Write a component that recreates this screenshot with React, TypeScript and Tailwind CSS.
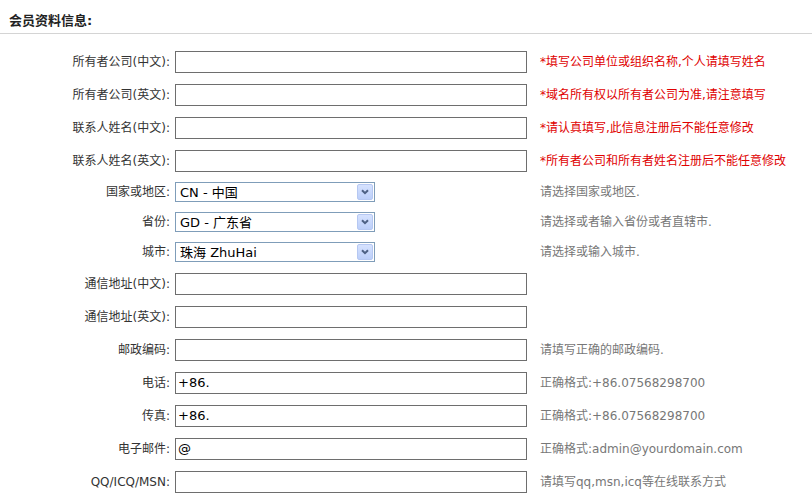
type Row = {
  label: string;
  kind: "input" | "select";
  value?: string;
  note?: string;
  red?: boolean;
};

const rows: Row[] = [
  { label: "所有者公司(中文):", kind: "input", note: "*填写公司单位或组织名称,个人请填写姓名", red: true },
  { label: "所有者公司(英文):", kind: "input", note: "*域名所有权以所有者公司为准,请注意填写", red: true },
  { label: "联系人姓名(中文):", kind: "input", note: "*请认真填写,此信息注册后不能任意修改", red: true },
  { label: "联系人姓名(英文):", kind: "input", note: "*所有者公司和所有者姓名注册后不能任意修改", red: true },
  { label: "国家或地区:", kind: "select", value: "CN - 中国", note: "请选择国家或地区." },
  { label: "省份:", kind: "select", value: "GD - 广东省", note: "请选择或者输入省份或者直辖市." },
  { label: "城市:", kind: "select", value: "珠海 ZhuHai", note: "请选择或输入城市." },
  { label: "通信地址(中文):", kind: "input" },
  { label: "通信地址(英文):", kind: "input" },
  { label: "邮政编码:", kind: "input", note: "请填写正确的邮政编码." },
  { label: "电话:", kind: "input", value: "+86.", note: "正确格式:+86.07568298700" },
  { label: "传真:", kind: "input", value: "+86.", note: "正确格式:+86.07568298700" },
  { label: "电子邮件:", kind: "input", value: "@", note: "正确格式:admin@yourdomain.com" },
  { label: "QQ/ICQ/MSN:", kind: "input", note: "请填写qq,msn,icq等在线联系方式" },
];

function FakeSelect({ value }: { value?: string }) {
  return (
    <div className="flex h-[20px] w-[200px] items-center border border-[#7f9db9] bg-white pl-[4px] pr-[1px]">
      <span className="flex-1 text-[13px] leading-none text-black">{value}</span>
      <span className="flex h-[16px] w-[16px] items-center justify-center rounded-[2px] border border-[#b6c8f2] bg-gradient-to-b from-[#d6e2fe] to-[#bccffa]">
        <svg width="8" height="6" viewBox="0 0 8 6">
          <path d="M1 1.2 L4 4.2 L7 1.2" stroke="#4d6185" strokeWidth="2" fill="none" />
        </svg>
      </span>
    </div>
  );
}

export default function App() {
  return (
    <div className="h-[504px] w-[812px] overflow-hidden bg-white font-['DejaVu_Sans','Noto_Sans_CJK_SC',sans-serif] text-[12px] text-[#333]">
      {/* section title */}
      <div className="h-[34px] border-b border-[#d4d4d4] pl-[9px] pt-[12px]">
        <span className="text-[13px] font-bold leading-[18px] text-[#222]">会员资料信息:</span>
      </div>

      <div className="pt-[11px]">
        {rows.map((r) => (
          <div
            key={r.label}
            className={r.kind === "select" ? "flex h-[30px] items-center" : "flex h-[33px] items-center"}
          >
            <div className="w-[171px] pr-[1px] text-right leading-none">{r.label}</div>
            <div className="ml-[4px]">
              {r.kind === "select" ? (
                <FakeSelect value={r.value} />
              ) : (
                <div className="flex h-[22px] w-[352px] items-center border border-[#6e6e6e] bg-white pl-[2px] text-[13px] leading-none text-black">
                  {r.value}
                </div>
              )}
            </div>
            {r.note && (
              <div
                className={
                  r.kind === "select"
                    ? "ml-[165px] leading-none text-[#777]"
                    : r.red
                      ? "ml-[13px] leading-none text-[#e00000]"
                      : "ml-[13px] leading-none text-[#777]"
                }
              >
                {r.note}
              </div>
            )}
          </div>
        ))}
      </div>
    </div>
  );
}
